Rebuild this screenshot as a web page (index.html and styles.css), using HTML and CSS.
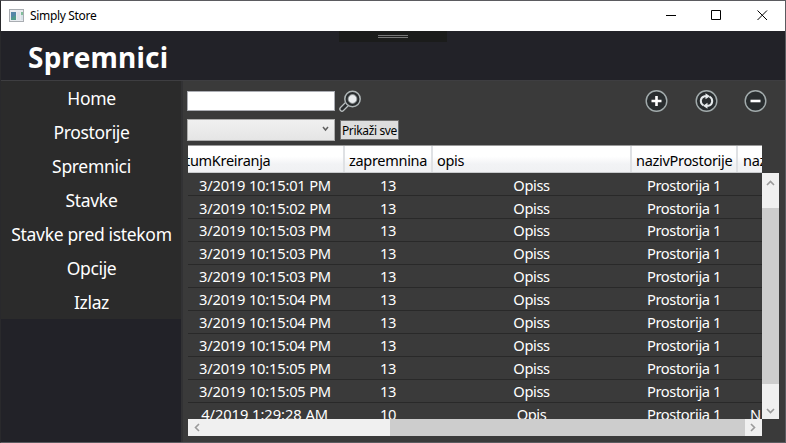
FILE: index.html
```html
<!DOCTYPE html>
<html lang="hr">
<head>
<meta charset="utf-8">
<title>Simply Store</title>
<link rel="stylesheet" href="styles.css">
</head>
<body>
<div class="window">
  <div class="titlebar">
    <svg class="app-icon" width="15" height="13" viewBox="0 0 15 13"><rect x=".5" y=".5" width="14" height="12" fill="#e9ecf0" stroke="#a9adb2"/><rect x="2" y="3" width="5" height="8" fill="#4f9a8c"/><path d="M2 3h5v3l-5 3z" fill="#5386a8"/><rect x="8" y="3" width="3" height="8" fill="#dfe3ea"/><rect x="12" y="3" width="2" height="3" fill="#81bf9b"/><rect x="12" y="6" width="2" height="5" fill="#d6e2e8"/></svg>
    <span class="app-name">Simply Store</span>
    <svg class="controls" width="106" height="12" viewBox="0 0 106 12" fill="none" stroke="#000"><path d="M0 6.500h10M45.500 1.500h9v9h-9zM91.500 1.500l9.500 9.500M101 1.500l-9.500 9.500"/></svg>
  </div>
  <header class="header">
    <h1>Spremnici</h1>
    <div class="grip"><i></i><i></i></div>
  </header>
  <div class="body">
    <nav class="sidebar">
      <a>Home</a><a>Prostorije</a><a>Spremnici</a><a>Stavke</a><a>Stavke pred istekom</a><a>Opcije</a><a>Izlaz</a>
    </nav>
    <main class="content">
      <div class="toolbar">
        <div class="search"></div>
        <svg class="lens" width="23" height="23" viewBox="0 0 23 23"><path d="M8 14l-5 5" stroke="#b9bebf" stroke-width="5.500" stroke-linecap="round"/><path d="M8 14l-5 5" stroke="#2a2d2f" stroke-width="3" stroke-linecap="round"/><circle cx="13.500" cy="9" r="7.700" fill="#292c2e" stroke="#aeb5b6" stroke-width="1.500"/><circle cx="13.500" cy="9" r="4.400" fill="#e9ecee" stroke="#8d9394" stroke-width=".8"/></svg>
        <div class="actions">
          <svg width="23" height="23" viewBox="0 0 23 23"><circle cx="11.500" cy="11" r="10.300" fill="#292d2f" stroke="#a3acad" stroke-width="1.400"/><path d="M11.500 6v10M6.500 11h10" stroke="#fff" stroke-width="2.600"/></svg>
          <svg width="23" height="23" viewBox="0 0 23 23"><circle cx="11.500" cy="11" r="10.300" fill="#292d2f" stroke="#a3acad" stroke-width="1.400"/><g fill="none" stroke="#e6eaec" stroke-width="2"><path d="M8.500 15.500C4.500 13 5 7.500 9.500 6.300h2M14.500 6.500c4 2.500 3.500 8-1 9.200h-2"/></g><path d="M10.500 3.300l4.500 3-4.500 3zM12.500 12.700l-4.500 3 4.500 3z" fill="#e6eaec"/></svg>
          <svg width="23" height="23" viewBox="0 0 23 23"><circle cx="11.500" cy="11" r="10.300" fill="#292d2f" stroke="#a3acad" stroke-width="1.400"/><path d="M6.500 11h10" stroke="#fff" stroke-width="2.600"/></svg>
        </div>
      </div>
      <div class="filter">
        <div class="combo"><svg width="7" height="6" viewBox="0 0 7 6"><path d="M1 1l2.500 3L6 1" fill="none" stroke="#606060" stroke-width="1.500"/></svg></div>
        <div class="show-all"><span>Prikaži sve</span></div>
      </div>
      <div class="grid">
        <div class="thead"><div><span class="h-date">tumKreiranja</span></div><div>zapremnina</div><div>opis</div><div>nazivProstorije</div><div>naz</div></div>
        <div class="rows">
          <div class="row"><div><span>23/2019 10:15:01 PM</span></div><div>13</div><div>Opiss</div><div>Prostorija 1</div><div></div></div>
          <div class="row"><div><span>23/2019 10:15:02 PM</span></div><div>13</div><div>Opiss</div><div>Prostorija 1</div><div></div></div>
          <div class="row"><div><span>23/2019 10:15:03 PM</span></div><div>13</div><div>Opiss</div><div>Prostorija 1</div><div></div></div>
          <div class="row"><div><span>23/2019 10:15:03 PM</span></div><div>13</div><div>Opiss</div><div>Prostorija 1</div><div></div></div>
          <div class="row"><div><span>23/2019 10:15:03 PM</span></div><div>13</div><div>Opiss</div><div>Prostorija 1</div><div></div></div>
          <div class="row"><div><span>23/2019 10:15:04 PM</span></div><div>13</div><div>Opiss</div><div>Prostorija 1</div><div></div></div>
          <div class="row"><div><span>23/2019 10:15:04 PM</span></div><div>13</div><div>Opiss</div><div>Prostorija 1</div><div></div></div>
          <div class="row"><div><span>23/2019 10:15:04 PM</span></div><div>13</div><div>Opiss</div><div>Prostorija 1</div><div></div></div>
          <div class="row"><div><span>23/2019 10:15:05 PM</span></div><div>13</div><div>Opiss</div><div>Prostorija 1</div><div></div></div>
          <div class="row"><div><span>23/2019 10:15:05 PM</span></div><div>13</div><div>Opiss</div><div>Prostorija 1</div><div></div></div>
          <div class="row last"><div><span>4/2019 1:29:28 AM</span></div><div>10</div><div>Opis</div><div>Prostorija 1</div><div>N</div></div>
        </div>
        <div class="vscroll"><svg width="9" height="6" viewBox="0 0 9 6"><path d="M1 5l3.500-3.500L8 5"/></svg><div class="vthumb"></div><svg width="9" height="6" viewBox="0 0 9 6"><path d="M1 1l3.500 3.500L8 1"/></svg></div>
        <div class="hscroll"><svg width="6" height="9" viewBox="0 0 6 9"><path d="M5 1L1.500 4.500 5 8"/></svg><div class="hthumb"></div><svg width="6" height="9" viewBox="0 0 6 9"><path d="M1 1l3.500 3.500L1 8"/></svg></div>
      </div>
    </main>
  </div>
</div>
</body>
</html>
```
FILE: styles.css
```css
* { box-sizing: border-box; }
body { margin: 0; font-family: "Noto Sans", "Open Sans", sans-serif; color: #fff; }
svg { display: block; flex: none; }
.window { width: 786px; height: 443px; border: 1px solid #5b5b60; border-left-color: #29292c; display: flex; flex-direction: column; overflow: hidden; background: #3a3a3a; }
.titlebar { height: 30px; flex: none; background: #fff; color: #000; display: flex; align-items: center; padding: 0 18px 2px 8px; }
.app-name { font-size: 12px; letter-spacing: -.33px; margin-left: 6px; }
.controls { margin-left: auto; margin-right: -5px; }
.header { height: 49px; flex: none; background: #222228; position: relative; }
h1 { margin: 0 0 0 27px; font-size: 28px; line-height: 53px; font-weight: 700; letter-spacing: .2px; }
.grip { position: absolute; left: 338px; top: 0; width: 108px; height: 11px; background: #1b1c1b; display: flex; flex-direction: column; align-items: center; gap: 1px; padding: 4px 0 0 0; }
.grip i { width: 30px; height: 1px; background: #777; }
.body { flex: 1; min-height: 0; display: flex; border-top: 1px solid #3e3e41; }
.sidebar { width: 180px; flex: none; background: #222228; }
.sidebar a { display: block; height: 34px; line-height: 35px; background: #2b2b2b; text-align: center; font-size: 17.5px; letter-spacing: -.33px; white-space: nowrap; padding-left: 1px; }
.content { flex: 1; border-left: 2px solid #323234; padding: 9px 0 0 4px; min-width: 0; }
.toolbar { display: flex; height: 23px; align-items: flex-start; }
.search { width: 148px; height: 20px; margin-top: 1px; background: #fff; border: 1px solid #abadb3; }
.lens { margin-left: 4px; }
.actions { margin-left: auto; display: flex; gap: 26.5px; padding-right: 18px; }
.filter { display: flex; height: 22px; margin-top: 6px; align-items: center; }
.combo { width: 148px; height: 22px; border: 1px solid #acacac; background: linear-gradient(#f0f0f0, #e5e5e5); display: flex; align-items: center; justify-content: flex-end; padding: 0 5px 3px 0; }
.show-all { margin-left: 5px; width: 59px; height: 20px; background: #ddd; border: 1px solid #707070; color: #000; font-size: 12px; display: flex; align-items: center; justify-content: center; white-space: nowrap; }
.show-all span { letter-spacing: -.35px; }
.grid { display: grid; grid-template-columns: 574px 17px; grid-template-rows: 28px 246px 17px; margin: 4px 0 0 1px; }
.thead { grid-column: 1; color: #000; background: linear-gradient(#fff 40%, #f2f3f5 70%, #f0f1f3); border-top: 1px solid #999; border-bottom: 1px solid #c8cacc; }
.thead, .row { display: grid; grid-template-columns: 157px 88px 199px 106px 24px; overflow: hidden; }
.thead > div { border-right: 2px solid #dfe1e4; padding-left: 4px; font-size: 14.5px; letter-spacing: -.3px; line-height: 29px; white-space: nowrap; overflow: hidden; }
.thead > div:first-child { padding-left: 0; }
.h-date { margin-left: -3px; }
.thead > div:last-child { border: 0; padding-left: 5px; }
.rows { grid-column: 1; grid-row: 2; overflow: hidden; font-size: 14.7px; }
.row { height: 23px; border-bottom: 1px solid #292929; line-height: 25px; text-align: center; white-space: nowrap; letter-spacing: -.4px; }
.row:nth-child(n+3) { line-height: 23px; }
.row > div { overflow: hidden; padding-right: 2px; }
.row > div:first-child { margin: 0 14px 0 11px; padding-right: 0; display: flex; justify-content: flex-end; letter-spacing: -.2px; }
.row > div:last-child { text-align: left; padding: 0 0 0 12px; }
.row.last > div:first-child { margin-right: 17px; letter-spacing: -.05px; }
.vscroll { grid-column: 2; grid-row: 2; background: #f0f0f0; display: flex; flex-direction: column; align-items: center; padding: 7px 0 5px; }
.vthumb { width: 17px; height: 176px; margin: 22px 0 auto; }
.vthumb, .hthumb { background: #cdcdcd; }
.hscroll { grid-column: 1; grid-row: 3; background: #f0f0f0; display: flex; align-items: center; padding: 0 6px; }
.hthumb { width: 355px; height: 17px; margin: 0 5px 0 auto; }
.vscroll path, .hscroll path { fill: none; stroke: #9a9a9a; stroke-width: 1.6; }
```
